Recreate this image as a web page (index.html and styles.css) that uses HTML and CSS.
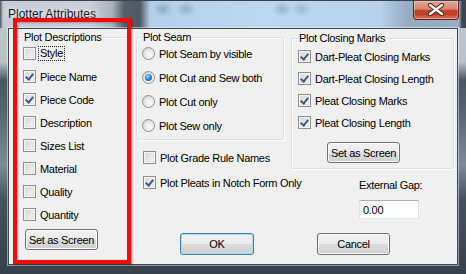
FILE: index.html
```html
<!DOCTYPE html>
<html>
<head>
    <title>Plotter Attributes</title>
    <link rel="stylesheet" href="styles.css">
</head>
<body>
    <div class="window">
        <div class="titlebar">
            <span class="title">Plotter Attributes</span>
            <div class="close">
                <svg width="46" height="19" viewBox="0 0 46 19">
                    <path d="M17 5 L29 14 M29 5 L17 14" stroke="#4a1d16" stroke-width="4.4" stroke-linecap="round"/>
                    <path d="M17 5 L29 14 M29 5 L17 14" stroke="#fff" stroke-width="2.4" stroke-linecap="round"/>
                </svg>
            </div>
        </div>

        <div class="client">
            <fieldset class="group descriptions">
                <legend>Plot Descriptions</legend>
                <div class="list wide">
                    <div class="opt"><span class="cb"></span><span class="focus">Style</span></div>
                    <div class="opt"><span class="cb on"></span>Piece Name</div>
                    <div class="opt"><span class="cb on"></span>Piece Code</div>
                    <div class="opt"><span class="cb"></span>Description</div>
                    <div class="opt"><span class="cb"></span>Sizes List</div>
                    <div class="opt"><span class="cb"></span>Material</div>
                    <div class="opt"><span class="cb"></span>Quality</div>
                    <div class="opt"><span class="cb"></span>Quantity</div>
                </div>
                <button class="btn set-left">Set as Screen</button>
            </fieldset>

            <div class="right">
                <div class="cols">
                    <div class="col-a">
                        <fieldset class="group seam">
                            <legend>Plot Seam</legend>
                            <div class="list roomy">
                                <div class="opt"><span class="rb"></span>Plot Seam by visible</div>
                                <div class="opt"><span class="rb on"></span>Plot Cut and Sew both</div>
                                <div class="opt"><span class="rb"></span>Plot Cut only</div>
                                <div class="opt"><span class="rb"></span>Plot Sew only</div>
                            </div>
                        </fieldset>
                        <div class="opt loose"><span class="cb"></span>Plot Grade Rule Names</div>
                        <div class="opt loose"><span class="cb on"></span>Plot Pleats in Notch Form Only</div>
                    </div>

                    <div class="col-b">
                        <fieldset class="group closing">
                            <legend>Plot Closing Marks</legend>
                            <div class="list tight">
                                <div class="opt"><span class="cb on"></span>Dart-Pleat Closing Marks</div>
                                <div class="opt"><span class="cb on"></span>Dart-Pleat Closing Length</div>
                                <div class="opt"><span class="cb on"></span>Pleat Closing Marks</div>
                                <div class="opt"><span class="cb on"></span>Pleat Closing Length</div>
                            </div>
                            <button class="btn set-right">Set as Screen</button>
                        </fieldset>
                        <div class="gap-label">External Gap:</div>
                        <div class="field">0.00</div>
                    </div>
                </div>

                <div class="actions">
                    <button class="btn default ok">OK</button>
                    <button class="btn cancel">Cancel</button>
                </div>
            </div>
        </div>

        <div class="marker"></div>
    </div>
</body>
</html>
```

FILE: styles.css
```css
body { margin: 0; font-family: "Liberation Sans", Arial, sans-serif; font-size: 11px; color: #000; }

.window {
    position: relative;
    width: 466px;
    height: 274px;
    overflow: hidden;
    background: linear-gradient(to bottom, #c3cad1 0, #b9c1c9 62px, #4b5663 80px, #56626f 110px, #7d8b99 165px, #45515d 200px, #36414c 274px);
}

/* title bar */
.titlebar {
    display: flex;
    align-items: flex-start;
    height: 28px;
    background:
        radial-gradient(ellipse 10px 8px at 163px 9px, rgba(80,100,130,.35), transparent),
        radial-gradient(ellipse 10px 8px at 186px 9px, rgba(80,100,130,.3), transparent),
        radial-gradient(ellipse 10px 8px at 282px 9px, rgba(80,100,130,.3), transparent),
        radial-gradient(ellipse 10px 8px at 302px 9px, rgba(80,100,130,.25), transparent),
        linear-gradient(to right, #4a525c 0, #c4cbd2 3px, #c9d0d7 90px, #aab2ba 112px, #57606a 124px, #4f5863 140px, #b3cfea 150px, #bcd7f0 260px, #b6d1ea 380px, #97abc0 408px, #9aaec2 459px, #3c4650 462px);
    box-shadow: inset 0 1px 0 #3a434c;
}
.title {
    margin: 7px 0 0 8px;
    font-size: 12px;
    line-height: 14px;
    color: #1a1a1a;
    text-shadow: 0 0 5px rgba(255,255,255,.9), 0 0 8px rgba(255,255,255,.7);
}
.close {
    margin: 1px 7px 0 auto;
    width: 46px;
    height: 19px;
    box-sizing: border-box;
    border: 1px solid #5b2a24;
    border-top: none;
    border-radius: 0 0 4px 4px;
    background: linear-gradient(#e6a494 0, #d88672 45%, #c0422c 52%, #c43f29 75%, #de7c62 100%);
    box-shadow: inset 0 0 0 1px rgba(255,255,255,.3);
}
.close svg { display: block; margin: -1px 0 0 -1px; }

/* client area */
.client {
    display: flex;
    gap: 6px;
    box-sizing: border-box;
    width: 450px;
    height: 237px;
    margin-left: 8px;
    padding: 2px 0 0 6px;
    border: 1px solid #3c4855;
    background: #f0f0f0;
    box-shadow: 0 0 0 1px rgba(255,255,255,.45);
    letter-spacing: -0.3px;
}

.group {
    flex: none;
    margin: 0;
    min-width: 0;
    box-sizing: border-box;
    border: 1px solid #d5dfe5;
    border-radius: 3px;
    box-shadow: inset 1px 1px 0 #fff, 1px 1px 0 #fff;
}
.group legend { padding: 0 1px; line-height: 13px; white-space: nowrap; }

.descriptions { width: 115px; padding: 2px 7px 9px; align-self: flex-start; }
.seam { width: 148px; padding: 2px 5px 6px; }
.closing { width: 163px; padding: 4px 6px 5px; margin-top: 1px; }

.list { display: flex; flex-direction: column; }
.wide { gap: 8px; }
.roomy { gap: 9px; }
.tight { gap: 7px; }

.opt { display: flex; align-items: center; gap: 4px; height: 15px; white-space: nowrap; }
.loose { margin-top: 10px; padding-left: 7px; }

.focus { outline: 1px dotted #222; padding: 0 1px; margin-left: -1px; line-height: 13px; }

/* check boxes and radio buttons */
.cb, .rb {
    flex: none;
    position: relative;
    width: 13px;
    height: 13px;
    box-sizing: border-box;
    border: 1px solid #8e8f8f;
    background: linear-gradient(135deg, #cdd1d6 0, #e8e9eb 55%, #f8f8f8 100%);
    box-shadow: inset 0 0 0 1px #f6f6f6, inset 0 0 0 2px #dfe1e4;
}
.cb.on::after {
    content: "";
    position: absolute;
    left: 2px;
    top: 0;
    width: 3px;
    height: 6px;
    border: solid #3e5796;
    border-width: 0 2px 2px 0;
    transform: translate(1px, 1px) rotate(40deg);
}
.rb {
    border-radius: 50%;
    background: radial-gradient(circle at 65% 65%, #fcfcfc 0, #e4e5e7 55%, #c9ccd0 100%);
    box-shadow: none;
}
.rb.on::after {
    content: "";
    position: absolute;
    left: 2px;
    top: 2px;
    width: 7px;
    height: 7px;
    border-radius: 50%;
    background: radial-gradient(circle at 40% 35%, #b6e3ff 0, #2b8ee0 40%, #0d4f9c 100%);
}

/* buttons */
.btn {
    display: block;
    box-sizing: border-box;
    width: 73px;
    height: 21px;
    padding: 0;
    font-family: inherit;
    font-size: 11px;
    letter-spacing: -0.3px;
    color: #000;
    border: 1px solid #707070;
    border-radius: 3px;
    background: linear-gradient(#f2f2f2 0, #ebebeb 48%, #dddddd 52%, #cfcfcf 100%);
    box-shadow: inset 0 0 0 1px #fbfbfb;
}
.set-left { margin: 7px 0 0 2px; }
.set-right { margin: 12px 0 0 29px; }
.default { border-color: #3c7fb1; box-shadow: inset 0 0 0 1px #a6def7; }

.right { flex: none; display: flex; flex-direction: column; }
.cols { display: flex; gap: 7px; align-items: flex-start; }
.col-a { flex: none; width: 148px; }
.col-b { flex: none; width: 163px; }

.gap-label { margin: 9px 0 0 68px; line-height: 15px; }
.field {
    box-sizing: border-box;
    width: 60px;
    height: 19px;
    margin: 7px 0 0 68px;
    padding: 2px 3px;
    line-height: 14px;
    background: #fff;
    border: 1px solid;
    border-color: #abadb3 #dbdfe6 #e3e9ef #e2e3ea;
}

.actions { display: flex; margin-top: 14px; }
.ok { width: 74px; height: 22px; margin-left: 44px; }
.cancel { width: 73px; height: 22px; margin-left: 63px; }

/* red annotation box drawn over the dialog */
.marker {
    position: absolute;
    left: 13px;
    top: 18px;
    width: 118px;
    height: 246px;
    box-sizing: border-box;
    border: 4px solid #f50a0a;
    box-shadow: 1px 1px 2px rgba(0,0,0,.35), inset 1px 1px 2px rgba(0,0,0,.25);
}
```
